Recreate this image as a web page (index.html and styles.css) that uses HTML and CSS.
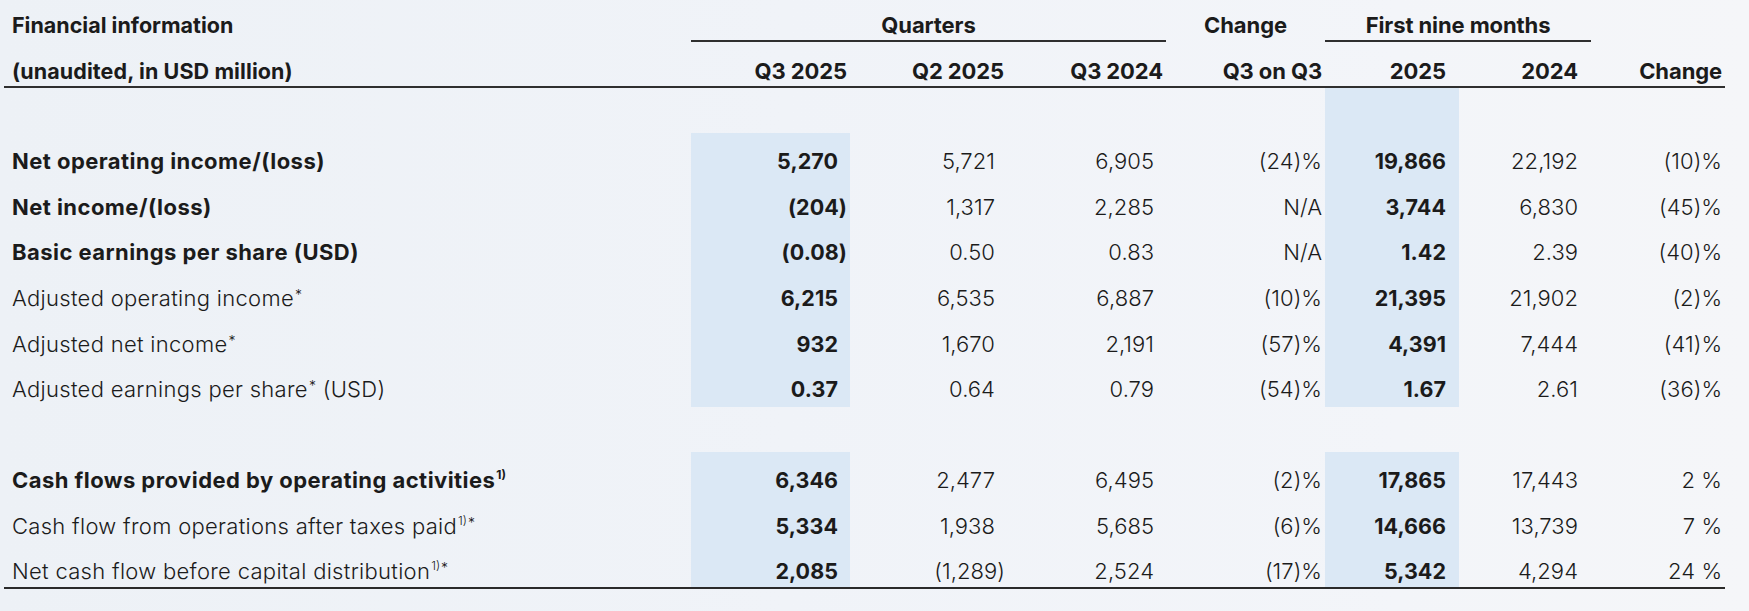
FILE: index.html
```html
<!DOCTYPE html>
<html lang="en">
<head>
<meta charset="utf-8">
<title>Financial information</title>
<link rel="stylesheet" href="styles.css">
</head>
<body>
<table class="fin">
  <colgroup>
    <col class="c-label"><col class="c-q"><col class="c-q2"><col class="c-q"><col class="c-q"><col class="c-m"><col class="c-m2"><col class="c-m">
  </colgroup>
  <thead>
    <tr class="h1">
      <th class="label">Financial information</th>
      <th class="group" colspan="3">Quarters</th>
      <th class="center">Change</th>
      <th class="group" colspan="2">First nine months</th>
      <th></th>
    </tr>
    <tr class="h2">
      <th class="label">(unaudited, in USD million)</th>
      <th class="q">Q3 2025</th>
      <th class="q">Q2 2025</th>
      <th class="q">Q3 2024</th>
      <th class="q">Q3 on Q3</th>
      <th class="m">2025</th>
      <th class="m">2024</th>
      <th class="q">Change</th>
    </tr>
  </thead>
  <tbody>
    <tr class="spacer"><td></td><td></td><td></td><td></td><td></td><td class="hl"></td><td></td><td></td></tr>

    <tr class="bold-row">
      <td class="label">Net operating income/(loss)</td>
      <td class="q pp hl b">5,270</td><td class="q pp">5,721</td><td class="q pp">6,905</td>
      <td class="q">(24)%</td><td class="m hl b">19,866</td><td class="m">22,192</td><td class="q">(10)%</td>
    </tr>
    <tr class="bold-row">
      <td class="label">Net income/(loss)</td>
      <td class="q hl b">(204)</td><td class="q pp">1,317</td><td class="q pp">2,285</td>
      <td class="q">N/A</td><td class="m hl b">3,744</td><td class="m">6,830</td><td class="q">(45)%</td>
    </tr>
    <tr class="bold-row">
      <td class="label">Basic earnings per share (USD)</td>
      <td class="q hl b">(0.08)</td><td class="q pp">0.50</td><td class="q pp">0.83</td>
      <td class="q">N/A</td><td class="m hl b">1.42</td><td class="m">2.39</td><td class="q">(40)%</td>
    </tr>
    <tr>
      <td class="label">Adjusted operating income<span class="ast">*</span></td>
      <td class="q pp hl b">6,215</td><td class="q pp">6,535</td><td class="q pp">6,887</td>
      <td class="q">(10)%</td><td class="m hl b">21,395</td><td class="m">21,902</td><td class="q">(2)%</td>
    </tr>
    <tr>
      <td class="label">Adjusted net income<span class="ast">*</span></td>
      <td class="q pp hl b">932</td><td class="q pp">1,670</td><td class="q pp">2,191</td>
      <td class="q">(57)%</td><td class="m hl b">4,391</td><td class="m">7,444</td><td class="q">(41)%</td>
    </tr>
    <tr>
      <td class="label">Adjusted earnings per share<span class="ast">*</span> (USD)</td>
      <td class="q pp hl b">0.37</td><td class="q pp">0.64</td><td class="q pp">0.79</td>
      <td class="q">(54)%</td><td class="m hl b">1.67</td><td class="m">2.61</td><td class="q">(36)%</td>
    </tr>

    <tr class="gap"><td></td><td></td><td></td><td></td><td></td><td></td><td></td><td></td></tr>

    <tr class="bold-row">
      <td class="label">Cash flows provided by operating activities<span class="fn">1)</span></td>
      <td class="q pp hl b">6,346</td><td class="q pp">2,477</td><td class="q pp">6,495</td>
      <td class="q">(2)%</td><td class="m hl b">17,865</td><td class="m">17,443</td><td class="q">2 %</td>
    </tr>
    <tr>
      <td class="label">Cash flow from operations after taxes paid<span class="fn">1)</span><span class="ast">*</span></td>
      <td class="q pp hl b">5,334</td><td class="q pp">1,938</td><td class="q pp">5,685</td>
      <td class="q">(6)%</td><td class="m hl b">14,666</td><td class="m">13,739</td><td class="q">7 %</td>
    </tr>
    <tr class="last">
      <td class="label">Net cash flow before capital distribution<span class="fn">1)</span><span class="ast">*</span></td>
      <td class="q pp hl b">2,085</td><td class="q neg">(1,289)</td><td class="q pp">2,524</td>
      <td class="q">(17)%</td><td class="m hl b">5,342</td><td class="m">4,294</td><td class="q">24 %</td>
    </tr>
  </tbody>
</table>
</body>
</html>
```
FILE: styles.css
```css
html, body {
  margin: 0;
  padding: 0;
}
body {
  width: 1749px;
  height: 611px;
  overflow: hidden;
  background: linear-gradient(90deg, #edf1f6 0%, #f0f3f8 45%, #f3f5f9 80%, #f5f6f9 100%);
  font-family: "Inter", "Noto Sans", sans-serif;
  color: #1b1b1b;
}

.fin {
  margin-left: 4px;
  width: 1720px;
  table-layout: fixed;
  border-collapse: separate;
  border-spacing: 0;
  font-size: 22px;
  line-height: 26px;
}

.c-label { width: 687px; }
.c-q { width: 159px; }
.c-q2 { width: 157px; }
.c-m { width: 134px; }
.c-m2 { width: 132px; }

.fin th,
.fin td {
  padding: 0 3px 0 0;
  vertical-align: top;
  text-align: right;
  white-space: nowrap;
}

.fin th {
  font-weight: 700;
  letter-spacing: -0.1px;
}

.fin .label {
  text-align: left;
  padding-left: 8px;
}

/* header rows */
.h1 { height: 42px; }
.h1 th { padding-top: 12px; }
.h1 th.group {
  text-align: center;
  padding-right: 0;
  border-bottom: 2px solid #2f2f2f;
}
.h1 th.center {
  text-align: center;
  padding-right: 0;
}
.h1 th.label { font-size: 21.5px; letter-spacing: 0; }

.h2 { height: 46px; }
.h2 th {
  padding-top: 16px;
  border-bottom: 2px solid #2f2f2f;
}
.h2 th.label { font-size: 21.5px; letter-spacing: 0.1px; }
.h2 th.m { padding-right: 13px; }

/* body */
.fin tbody tr { height: 45.667px; }
.fin tbody tr.spacer,
.fin tbody tr.gap { height: 45px; }

.fin td {
  padding-top: 15px;
  font-weight: 300;
  letter-spacing: 0.05px;
}
.fin td.label { font-weight: 300; letter-spacing: 0.3px; }
.bold-row td.label { font-weight: 700; letter-spacing: 0.45px; }

.fin td.q { padding-right: 3px; }
.fin td.q.pp { padding-right: 12px; }
.fin td.q.neg { padding-right: 2px; }
.fin td.m { padding-right: 13px; }

.fin td.b {
  font-weight: 700;
  font-size: 21.5px;
}

.hl { background: #dbe8f5; }

.last td { border-bottom: 2px solid #2a2a2a; }

.ast {
  font-size: 14px;
  vertical-align: 6px;
  line-height: 0;
  margin-left: 1px;
}
.fn {
  font-size: 12px;
  vertical-align: 9px;
  line-height: 0;
  margin-left: 1px;
  letter-spacing: 0;
}
```
